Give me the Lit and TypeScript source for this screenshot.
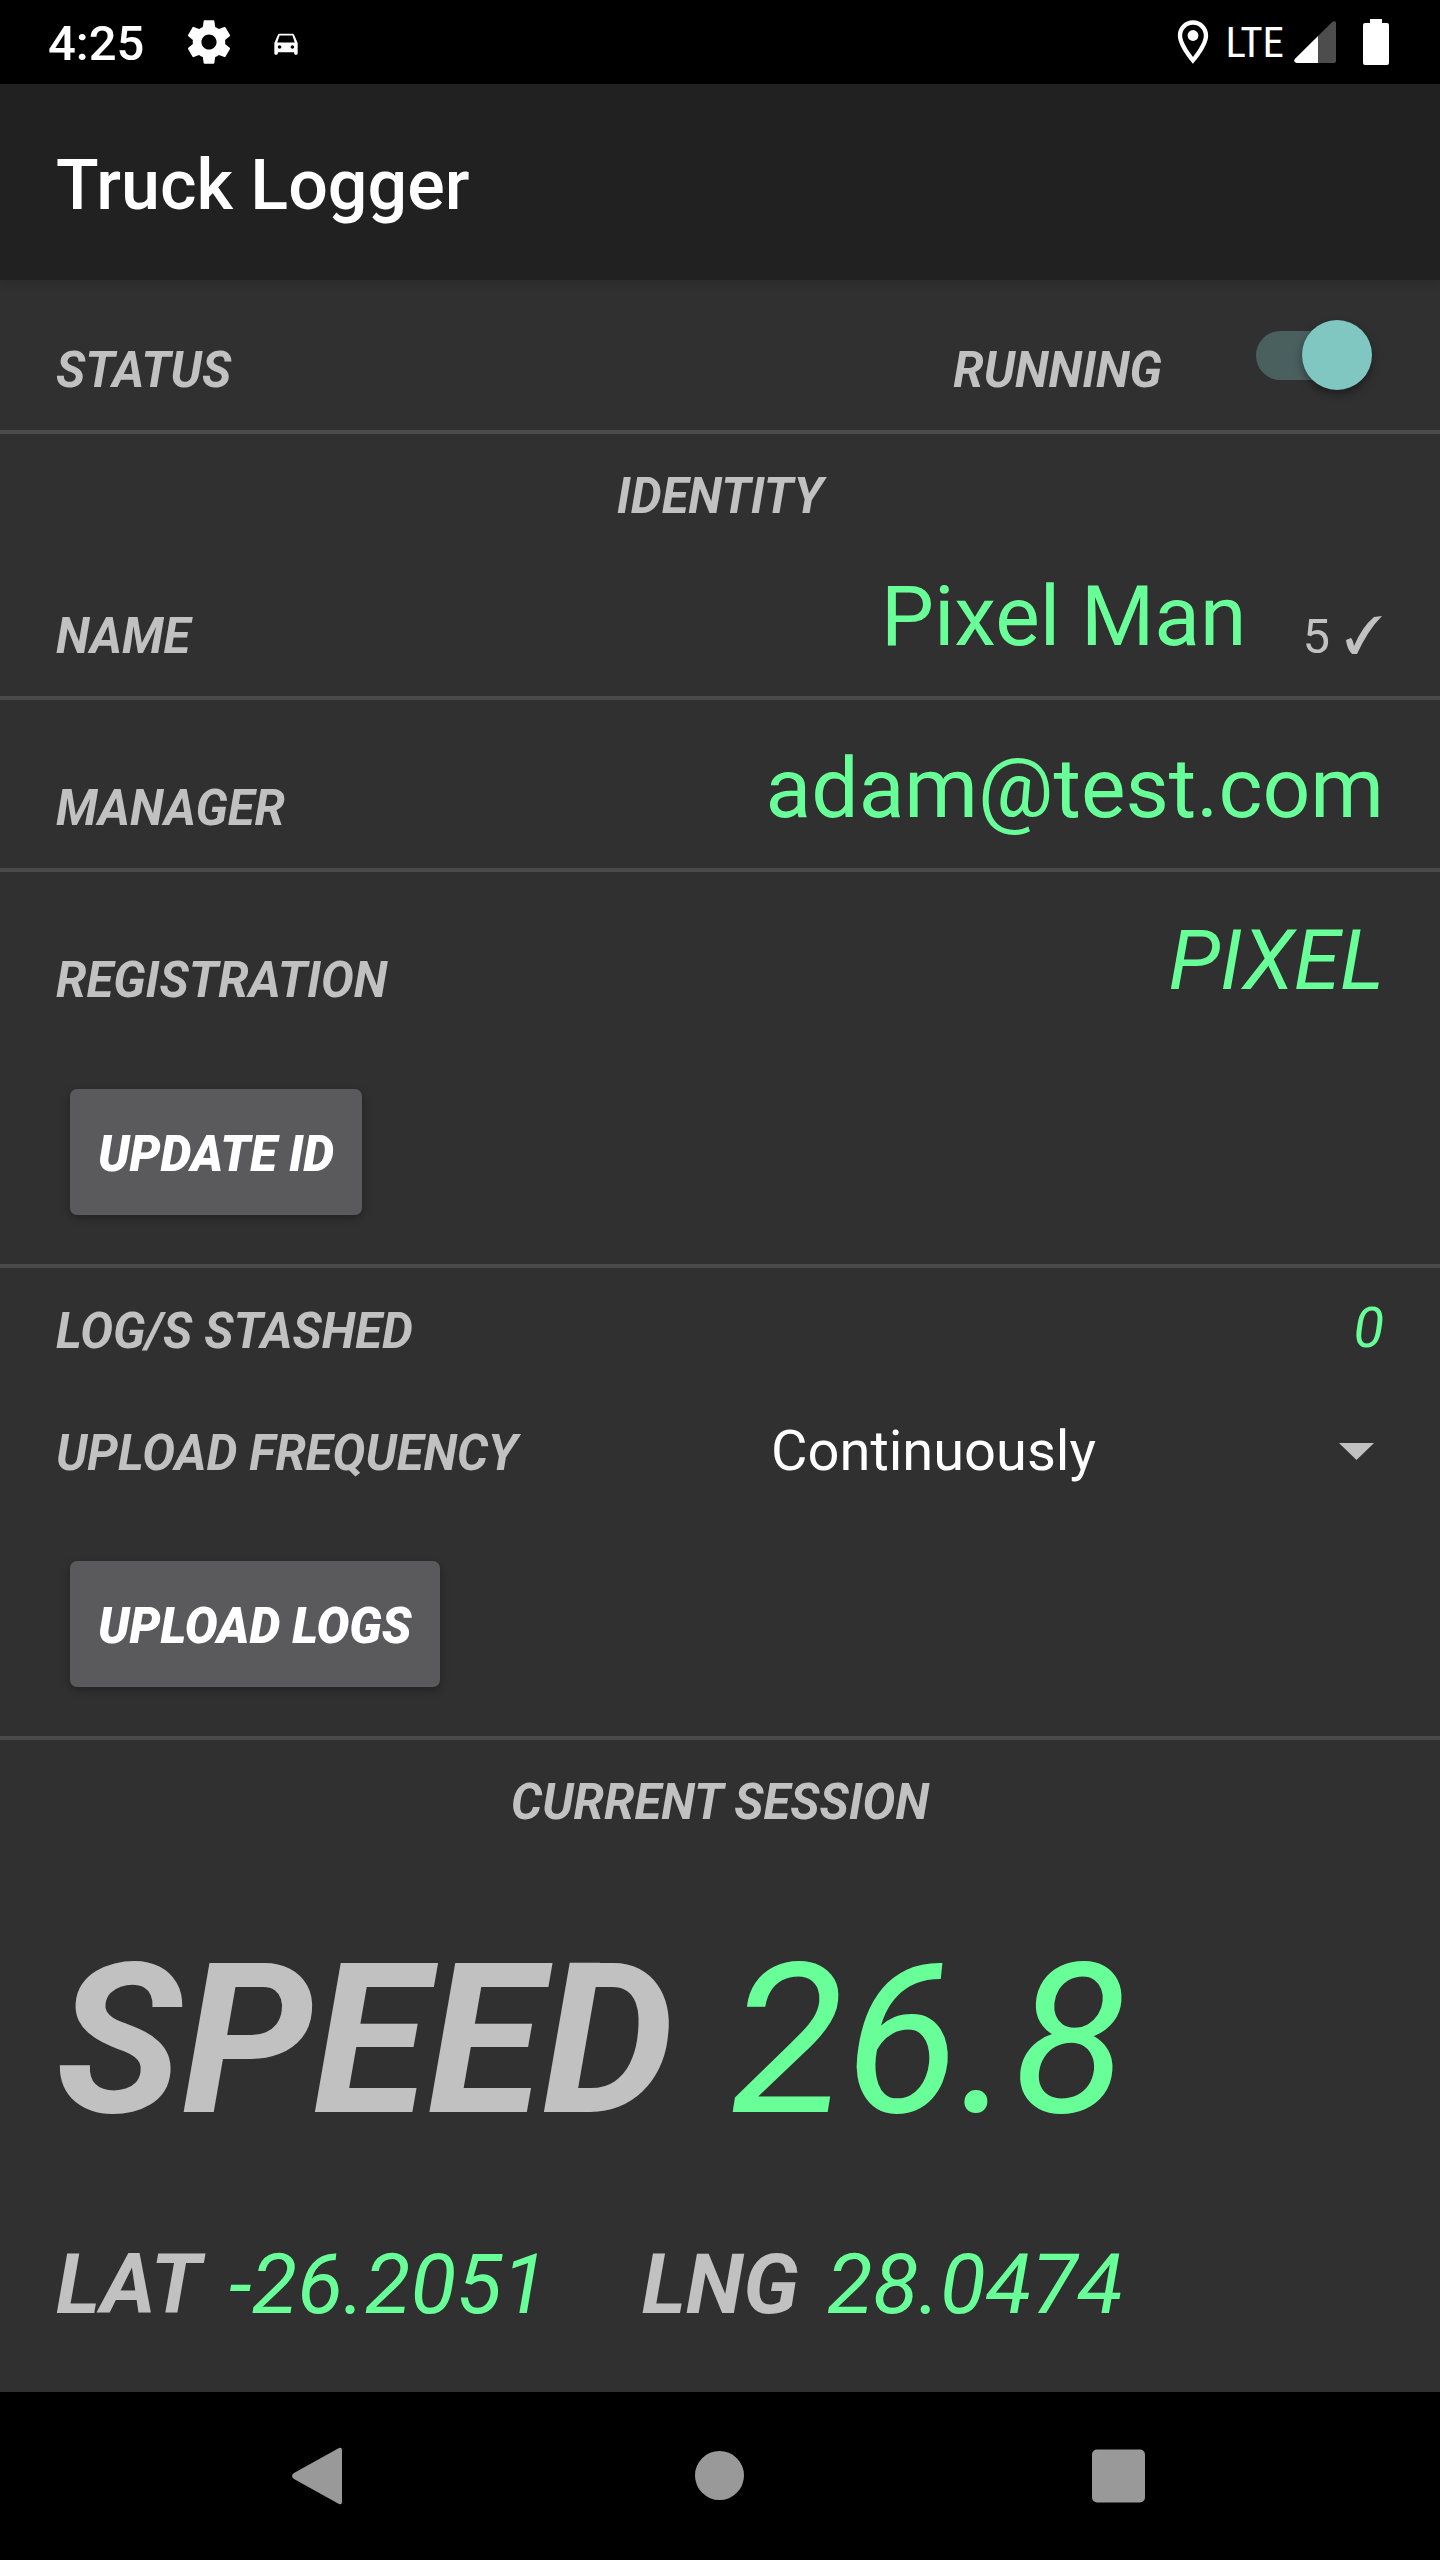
import { LitElement, html, css, svg } from "lit";
import { customElement, state } from "lit/decorators.js";

@customElement("status-bar")
export class StatusBar extends LitElement {
  static styles = css`
    :host {
      display: flex;
      align-items: center;
      justify-content: space-between;
      box-sizing: border-box;
      height: 84px;
      padding: 0 51px 0 48px;
      background: #000;
      color: #fff;
    }
    .group {
      display: flex;
      align-items: center;
    }
    .time {
      padding-top: 4px;
      font-size: 49px;
      line-height: 58px;
      font-weight: 500;
    }
    .gear {
      width: 52px;
      height: 52px;
      margin-left: 39px;
    }
    .car {
      width: 28px;
      height: 28px;
      margin: 2px 0 0 37px;
    }
    .pin {
      width: 52px;
      height: 52px;
    }
    .network {
      margin: 0 10px 0 7px;
      font: 43px/50px "Liberation Sans Narrow", "Roboto Condensed", Roboto, sans-serif;
    }
    .signal {
      width: 42px;
      height: 42px;
    }
    .battery {
      width: 26px;
      height: 46px;
      margin-left: 27px;
    }
    svg {
      display: block;
      fill: currentColor;
    }
  `;

  render() {
    return html`
      <div class="group">
        <span class="time">4:25</span>
        <svg class="gear" viewBox="0 0 24 24" aria-hidden="true">
          <path d="M19.43 12.98c.04-.32.07-.64.07-.98s-.03-.66-.07-.98l2.11-1.65c.19-.15.24-.42.12-.64l-2-3.46c-.12-.22-.39-.3-.61-.22l-2.49 1c-.52-.4-1.08-.73-1.69-.98l-.38-2.65C14.46 2.18 14.25 2 14 2h-4c-.25 0-.46.18-.49.42l-.38 2.65c-.61.25-1.17.59-1.69.98l-2.49-1c-.23-.09-.49 0-.61.22l-2 3.46c-.13.22-.07.49.12.64l2.11 1.65c-.04.32-.07.65-.07.98s.03.66.07.98l-2.11 1.65c-.19.15-.24.42-.12.64l2 3.46c.12.22.39.3.61.22l2.49-1c.52.4 1.08.73 1.69.98l.38 2.65c.03.24.24.42.49.42h4c.25 0 .46-.18.49-.42l.38-2.65c.61-.25 1.17-.59 1.69-.98l2.49 1c.23.09.49 0 .61-.22l2-3.46c.12-.22.07-.49-.12-.64l-2.11-1.65zM12 15.5c-1.93 0-3.5-1.57-3.5-3.5s1.57-3.5 3.5-3.5 3.5 1.57 3.5 3.5-1.57 3.5-3.5 3.5z" />
        </svg>
        <svg class="car" viewBox="0 0 24 24" aria-hidden="true">
          <path fill-rule="evenodd" d="M18.92 5.01C18.72 4.42 18.16 4 17.5 4h-11c-.66 0-1.21.42-1.42 1.01L2 12v9c0 .55.45 1 1 1h1c.55 0 1-.45 1-1v-1h14v1c0 .55.45 1 1 1h1c.55 0 1-.45 1-1v-9l-3.08-6.99zM6.500 17C5.670 17 5 16.330 5 15.500S5.670 14 6.500 14s1.500.67 1.500 1.500S7.330 17 6.500 17zm11 0c-.83 0-1.500-.67-1.500-1.500s.67-1.500 1.500-1.500 1.500.67 1.500 1.500-.67 1.500-1.500 1.500zM4.500 11.500l2-6h11l2 6h-15z" />
        </svg>
      </div>
      <div class="group">
        <svg class="pin" viewBox="0 0 24 24" aria-hidden="true">
          <path d="M12 2C8.130 2 5 5.130 5 9c0 5.250 7 13 7 13s7-7.750 7-13c0-3.870-3.130-7-7-7zM7 9c0-2.760 2.240-5 5-5s5 2.240 5 5c0 2.880-2.880 7.190-5 9.880C9.920 16.210 7 11.850 7 9z" />
          <circle cx="12" cy="9" r="2.500" />
        </svg>
        <span class="network">LTE</span>
        <svg class="signal" viewBox="0 0 42 42" aria-hidden="true">
          <path fill="#4d4d4d" d="M24 15 38.500.8Q42-1 42 2v38q0 2-2 2H24z" />
          <path d="M24 15v27H2.500Q-1 41 .8 38z" />
        </svg>
        <svg class="battery" viewBox="0 0 26 46" aria-hidden="true">
          <path d="M7 0h12v4h5q2 0 2 2v38q0 2-2 2H2q-2 0-2-2V6q0-2 2-2h5z" />
        </svg>
      </div>
    `;
  }
}

@customElement("nav-bar")
export class NavBar extends LitElement {
  static styles = css`
    :host {
      display: grid;
      grid-template-columns: repeat(3, 400px);
      justify-content: center;
      align-items: center;
      height: 168px;
      background: #000;
      color: #999;
    }
    .key {
      display: flex;
      justify-content: center;
      padding: 0;
      border: 0;
      background: none;
      color: inherit;
    }
    svg {
      width: 60px;
      height: 60px;
      fill: currentColor;
    }
  `;

  private key(label: string, shape: unknown) {
    return html`<button class="key" type="button" aria-label=${label}>
      <svg viewBox="0 0 60 60" aria-hidden="true">${shape}</svg>
    </button>`;
  }

  render() {
    return html`
      ${this.key("Back", svg`<path d="M49 2q3-1 3 2v52q0 3-3 2L4 33q-4-3 0-6z" />`)}
      ${this.key("Home", svg`<circle cx="29.500" cy="29.500" r="24.500" />`)}
      ${this.key("Recents", svg`<rect x="2" y="3.500" width="53" height="53" rx="5" />`)}
    `;
  }
}

@customElement("app-root")
export class AppRoot extends LitElement {
  static styles = css`
    :host {
      display: flex;
      flex-direction: column;
      min-height: 100vh;
      background: #303030;
      color: #c1c1c1;
      font-family: Roboto, "Liberation Sans", sans-serif;
    }
    .app-bar {
      padding: 60px 56px 54px;
      background: #212121;
      box-shadow: 0 2px 12px rgba(0, 0, 0, 0.15);
      color: #fff;
    }
    .title {
      margin: 0;
      font-size: 70px;
      line-height: 82px;
      font-weight: 500;
    }
    .content {
      flex: 1;
    }
    .section {
      border-bottom: 4px solid #4a4a4a;
    }
    .heading,
    .label {
      margin: 0;
      font-size: 49px;
      line-height: 58px;
      font-weight: 700;
      font-style: italic;
    }
    .heading {
      padding: 34px 56px 2px;
      text-align: center;
    }
    .row {
      display: flex;
      align-items: flex-end;
      padding: 40px 56px 30px;
    }
    .row .label:first-child {
      flex: 1;
    }
    .value {
      color: #69ff98;
      font-size: 84px;
      line-height: 98px;
    }
    .slanted {
      font-style: italic;
    }
    .score {
      display: flex;
      align-items: flex-end;
      gap: 14px;
      margin-left: 56px;
      font-size: 49px;
      line-height: 58px;
    }
    .tick {
      width: 40px;
      height: 40px;
      margin-bottom: 10px;
      fill: currentColor;
    }
    .toggle {
      appearance: none;
      display: grid;
      align-items: center;
      width: 116px;
      height: 70px;
      margin: 0 12px 10px 94px;
      cursor: pointer;
    }
    .toggle::before,
    .toggle::after {
      content: "";
      grid-area: 1 / 1;
    }
    .toggle::before {
      width: 112px;
      height: 49px;
      border-radius: 25px;
      background: #6b6b6b;
    }
    .toggle:checked::before {
      background: #4a605e;
    }
    .toggle::after {
      width: 70px;
      height: 70px;
      border-radius: 50%;
      background: #bdbdbd;
      box-shadow: 0 4px 8px rgba(0, 0, 0, 0.4);
    }
    .toggle:checked::after {
      justify-self: end;
      background: #80c7c1;
    }
    .actions {
      padding: 49px 70px;
    }
    .button {
      display: block;
      height: 126px;
      padding: 6px 28px 0;
      border: 0;
      border-radius: 7px;
      background: #5a5a5c;
      box-shadow: 0 3px 8px rgba(0, 0, 0, 0.3);
      color: #fff;
      font: italic 900 49px/58px Roboto, "Liberation Sans", sans-serif;
    }
    .stash {
      padding: 27px 56px 0;
    }
    .count {
      color: #69ff98;
      font-size: 56px;
      line-height: 66px;
      font-style: italic;
    }
    .frequency {
      display: grid;
      grid-template-columns: 7fr 6fr;
      align-items: baseline;
      padding: 57px 56px 28px;
    }
    .picker {
      display: grid;
      align-items: center;
    }
    .select {
      appearance: none;
      grid-area: 1 / 1;
      width: 100%;
      height: 66px;
      margin: 0;
      padding: 0;
      border: 0;
      background: none;
      color: #fff;
      font: 56px/66px Roboto, "Liberation Sans", sans-serif;
    }
    .caret {
      grid-area: 1 / 1;
      justify-self: end;
      width: 35px;
      height: 17px;
      margin-right: 10px;
      fill: currentColor;
      pointer-events: none;
    }
    .readings {
      display: flex;
      flex-direction: column;
      gap: 73px;
      padding: 83px 56px 58px;
    }
    .line,
    .reading {
      display: flex;
      align-items: baseline;
    }
    .line {
      gap: 94px;
    }
    .reading {
      gap: 28px;
      font-size: 84px;
      line-height: 98px;
      font-style: italic;
    }
    .reading .name {
      font-weight: 700;
    }
    .reading .figure {
      color: #69ff98;
    }
    .reading.large {
      gap: 56px;
      font-size: 210px;
      line-height: 246px;
    }
  `;

  @state() private running = true;

  private onToggle(event: Event) {
    this.running = (event.target as HTMLInputElement).checked;
  }

  private reading(name: string, figure: string, size = "") {
    return html`<div class="reading ${size}">
      <span class="name">${name}</span>
      <span class="figure">${figure}</span>
    </div>`;
  }

  render() {
    return html`
      <status-bar></status-bar>
      <header class="app-bar"><h1 class="title">Truck Logger</h1></header>
      <main class="content">
        <section class="section row">
          <span class="label">STATUS</span>
          <label class="label" for="running">${this.running ? "RUNNING" : "STOPPED"}</label>
          <input class="toggle" id="running" type="checkbox" role="switch" .checked=${this.running} @change=${this.onToggle} />
        </section>

        <h2 class="heading">IDENTITY</h2>
        <section class="section row">
          <span class="label">NAME</span>
          <span class="value">Pixel Man</span>
          <span class="score">
            5
            <svg class="tick" viewBox="0 0 40 40" aria-hidden="true">
              <path d="M2 24 7 22q2 2 3 8Q18 11 30 1l8-1q-14 14-25 38H8Q3 33 2 24z" />
            </svg>
          </span>
        </section>
        <section class="section row">
          <span class="label">MANAGER</span>
          <span class="value">adam@test.com</span>
        </section>
        <section class="section">
          <div class="row">
            <span class="label">REGISTRATION</span>
            <span class="value slanted">PIXEL</span>
          </div>
          <div class="actions">
            <button class="button" type="button">UPDATE ID</button>
          </div>
        </section>

        <section class="section">
          <div class="row stash">
            <span class="label">LOG/S STASHED</span>
            <span class="count">0</span>
          </div>
          <div class="frequency">
            <label class="label" for="frequency">UPLOAD FREQUENCY</label>
            <div class="picker">
              <select class="select" id="frequency">
                <option>Continuously</option>
              </select>
              <svg class="caret" viewBox="0 0 35 17" aria-hidden="true"><path d="M0 0h35L17.500 17z" /></svg>
            </div>
          </div>
          <div class="actions">
            <button class="button" type="button">UPLOAD LOGS</button>
          </div>
        </section>

        <section>
          <h2 class="heading">CURRENT SESSION</h2>
          <div class="readings">
            ${this.reading("SPEED", "26.8", "large")}
            <div class="line">
              ${this.reading("LAT", "-26.2051")}
              ${this.reading("LNG", "28.0474")}
            </div>
          </div>
        </section>
      </main>
      <nav-bar></nav-bar>
    `;
  }
}
